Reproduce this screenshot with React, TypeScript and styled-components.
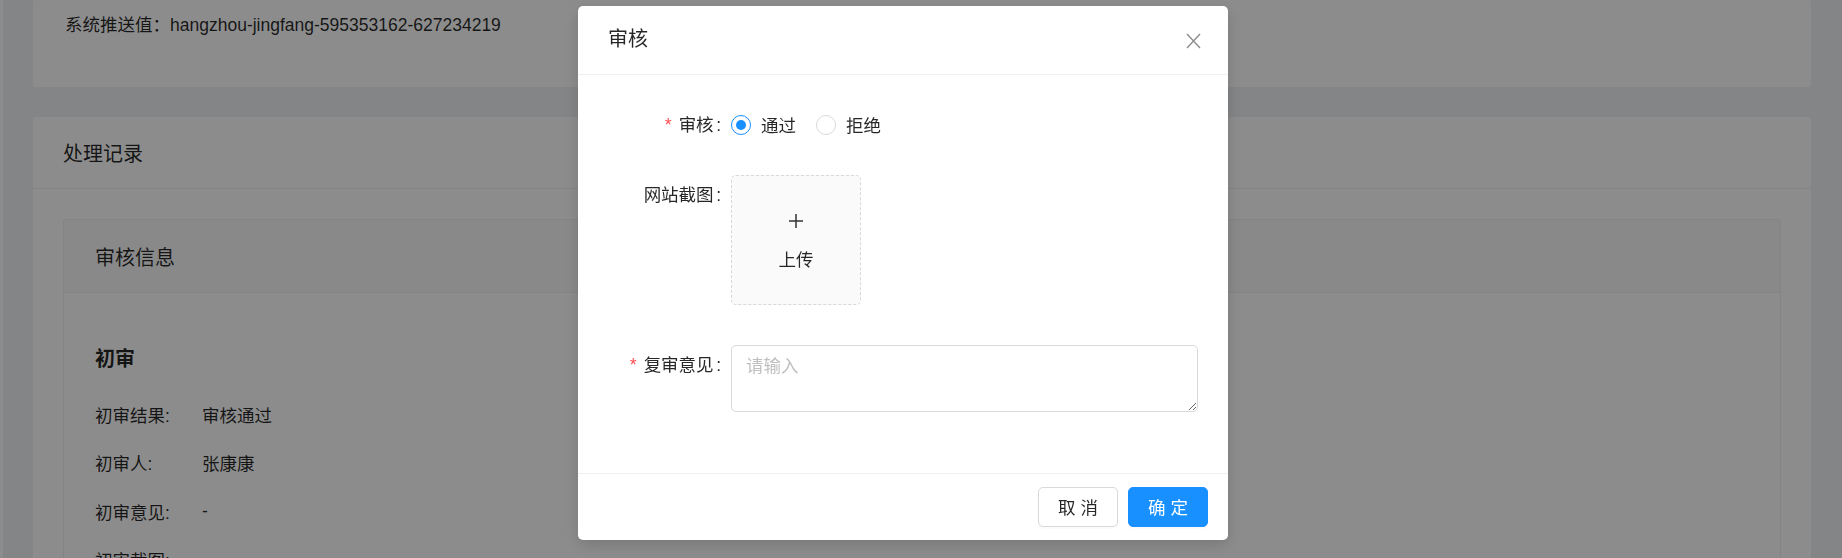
import React from "react";
import styled, { createGlobalStyle } from "styled-components";

const GlobalStyle = createGlobalStyle`
  html, body {
    margin: 0;
    padding: 0;
    background: #f0f2f5;
    overflow: hidden;
    font-family: "Liberation Sans", "Noto Sans CJK SC", sans-serif;
    font-size: 17.5px;
    color: rgba(0, 0, 0, 0.85);
  }
  * { box-sizing: border-box; }
`;

const Page = styled.div`
  display: flex;
  width: 1842px;
  height: 558px;
  overflow: hidden;
`;

const SideEdge = styled.div`
  width: 3px;
  background: #fff;
  flex: none;
`;

const Main = styled.main`
  flex: 1;
  display: flex;
  flex-direction: column;
  gap: 30px;
  padding: 0 31px 0 30px;
`;

const Card = styled.section`
  background: #fff;
  border-radius: 3px;
`;

const InfoBlock = styled.div`
  padding: 12px 32px 49px;
  line-height: 26px;
`;

const CardHead = styled.div<{ $inner?: boolean }>`
  display: flex;
  align-items: center;
  height: ${(p) => (p.$inner ? "73px" : "72px")};
  padding: 0 30px 0 ${(p) => (p.$inner ? "31px" : "30px")};
  border-bottom: 1px solid #f0f0f0;
  background: ${(p) => (p.$inner ? "#fafafa" : "transparent")};
  font-size: 20px;
  color: rgba(0, 0, 0, 0.85);
`;

const CardBody = styled.div`
  padding: 30px;
`;

const InnerCard = styled.div`
  border: 1px solid #f0f0f0;
  border-radius: 3px;
  background: #fff;
`;

const InnerBody = styled.div`
  padding: 51px 31px 30px;
`;

const SectionTitle = styled.h3`
  margin: 0 0 16px;
  font-size: 20px;
  line-height: 30px;
  font-weight: 700;
  color: rgba(0, 0, 0, 0.85);
`;

const InfoRow = styled.div`
  display: grid;
  grid-template-columns: 107px 1fr;
  align-items: center;
  height: 48.5px;
`;

const Mask = styled.div`
  position: fixed;
  inset: 0;
  background: rgba(0, 0, 0, 0.45);
`;

const ModalBox = styled.div`
  position: fixed;
  left: 578px;
  top: 6px;
  width: 650px;
  background: #fff;
  border-radius: 5px;
  box-shadow: 0 5px 15px rgba(0, 0, 0, 0.15);
  display: flex;
  flex-direction: column;
`;

const ModalHeader = styled.div`
  padding: 20px 30px;
  border-bottom: 1px solid #f0f0f0;
  font-size: 20px;
  line-height: 27.5px;
  color: rgba(0, 0, 0, 0.85);
`;

const CloseButton = styled.button`
  position: absolute;
  top: 0;
  right: 0;
  width: 70px;
  height: 70px;
  border: 0;
  background: transparent;
  padding: 0;
  display: flex;
  align-items: center;
  justify-content: center;
  cursor: pointer;
`;

const ModalBody = styled.div`
  padding: 30px 30px 31px;
`;

const FormItem = styled.div`
  display: grid;
  grid-template-columns: 123px 1fr;
  margin-bottom: 30px;
`;

const Label = styled.div<{ $required?: boolean }>`
  height: 40px;
  text-align: right;
  line-height: 40px;
  color: rgba(0, 0, 0, 0.85);
  white-space: nowrap;
  &::before {
    content: ${(p) => (p.$required ? '"*"' : "none")};
    color: #ff4d4f;
    margin-right: 5px;
    font-family: "Liberation Mono", monospace;
  }
  &::after {
    content: ":";
    margin: 0 10px 0 2.5px;
  }
`;

const RadioGroup = styled.div`
  display: flex;
  align-items: center;
  height: 40px;
`;

const RadioOption = styled.label`
  display: flex;
  align-items: center;
  margin-right: 10px;
`;

const RadioCircle = styled.span<{ $checked?: boolean }>`
  width: 20px;
  height: 20px;
  border-radius: 50%;
  border: 1px solid ${(p) => (p.$checked ? "#1890ff" : "#d9d9d9")};
  display: flex;
  align-items: center;
  justify-content: center;
  &::after {
    content: "";
    width: 10px;
    height: 10px;
    border-radius: 50%;
    background: #1890ff;
    display: ${(p) => (p.$checked ? "block" : "none")};
  }
`;

const RadioText = styled.span`
  padding: 0 10px;
`;

const UploadBox = styled.div`
  width: 130px;
  height: 130px;
  margin-bottom: 10px;
  padding-top: 6px;
  border: 1px dashed #d9d9d9;
  border-radius: 5px;
  background: #fafafa;
  display: flex;
  flex-direction: column;
  align-items: center;
  justify-content: center;
  gap: 18px;
`;

const UploadText = styled.div`
  line-height: 26px;
`;

const TextArea = styled.textarea`
  display: block;
  width: 100%;
  height: 67px;
  padding: 7px 14px;
  border: 1px solid #d9d9d9;
  border-radius: 5px;
  font-family: inherit;
  font-size: 17.5px;
  line-height: 1.5;
  color: rgba(0, 0, 0, 0.85);
  resize: vertical;
  outline: none;
  &::placeholder {
    color: #bfbfbf;
  }
`;

const ModalFooter = styled.div`
  display: flex;
  justify-content: flex-end;
  gap: 10px;
  padding: 13px 20px 13px;
  border-top: 1px solid #f0f0f0;
`;

const Button = styled.button<{ $primary?: boolean }>`
  height: 40px;
  width: 80px;
  padding: 0;
  border-radius: 5px;
  font-family: inherit;
  font-size: 17.5px;
  border: 1px solid ${(p) => (p.$primary ? "#1890ff" : "#d9d9d9")};
  background: ${(p) => (p.$primary ? "#1890ff" : "#fff")};
  color: ${(p) => (p.$primary ? "#fff" : "rgba(0,0,0,0.85)")};
  box-shadow: 0 2px 0 rgba(0, 0, 0, 0.015);
  cursor: pointer;
`;

const rows: [string, string][] = [
  ["初审结果:", "审核通过"],
  ["初审人:", "张康康"],
  ["初审意见:", "-"],
  ["初审截图:", ""],
];

export default function App() {
  return (
    <>
      <GlobalStyle />
      <Page>
        <SideEdge />
        <Main>
          <Card>
            <InfoBlock>系统推送值：hangzhou-jingfang-595353162-627234219</InfoBlock>
          </Card>
          <Card>
            <CardHead>处理记录</CardHead>
            <CardBody>
              <InnerCard>
                <CardHead $inner>审核信息</CardHead>
                <InnerBody>
                  <SectionTitle>初审</SectionTitle>
                  {rows.map(([k, v]) => (
                    <InfoRow key={k}>
                      <span>{k}</span>
                      <span>{v}</span>
                    </InfoRow>
                  ))}
                </InnerBody>
              </InnerCard>
            </CardBody>
          </Card>
        </Main>
      </Page>
      <Mask />
      <ModalBox>
        <ModalHeader>审核</ModalHeader>
        <CloseButton aria-label="close">
          <svg width="15" height="16" viewBox="0 0 15 16">
            <path d="M1 1 L14 15 M14 1 L1 15" stroke="rgba(0,0,0,0.45)" strokeWidth="1.4" fill="none" />
          </svg>
        </CloseButton>
        <ModalBody>
          <FormItem>
            <Label $required>审核</Label>
            <RadioGroup>
              <RadioOption>
                <RadioCircle $checked />
                <RadioText>通过</RadioText>
              </RadioOption>
              <RadioOption>
                <RadioCircle />
                <RadioText>拒绝</RadioText>
              </RadioOption>
            </RadioGroup>
          </FormItem>
          <FormItem>
            <Label>网站截图</Label>
            <div>
              <UploadBox>
                <svg width="16" height="16" viewBox="0 0 16 16">
                  <path d="M8 1 V15 M1 8 H15" stroke="#333" strokeWidth="1.5" fill="none" />
                </svg>
                <UploadText>上传</UploadText>
              </UploadBox>
            </div>
          </FormItem>
          <FormItem>
            <Label $required>复审意见</Label>
            <TextArea placeholder="请输入" />
          </FormItem>
        </ModalBody>
        <ModalFooter>
          <Button>取 消</Button>
          <Button $primary>确 定</Button>
        </ModalFooter>
      </ModalBox>
    </>
  );
}
